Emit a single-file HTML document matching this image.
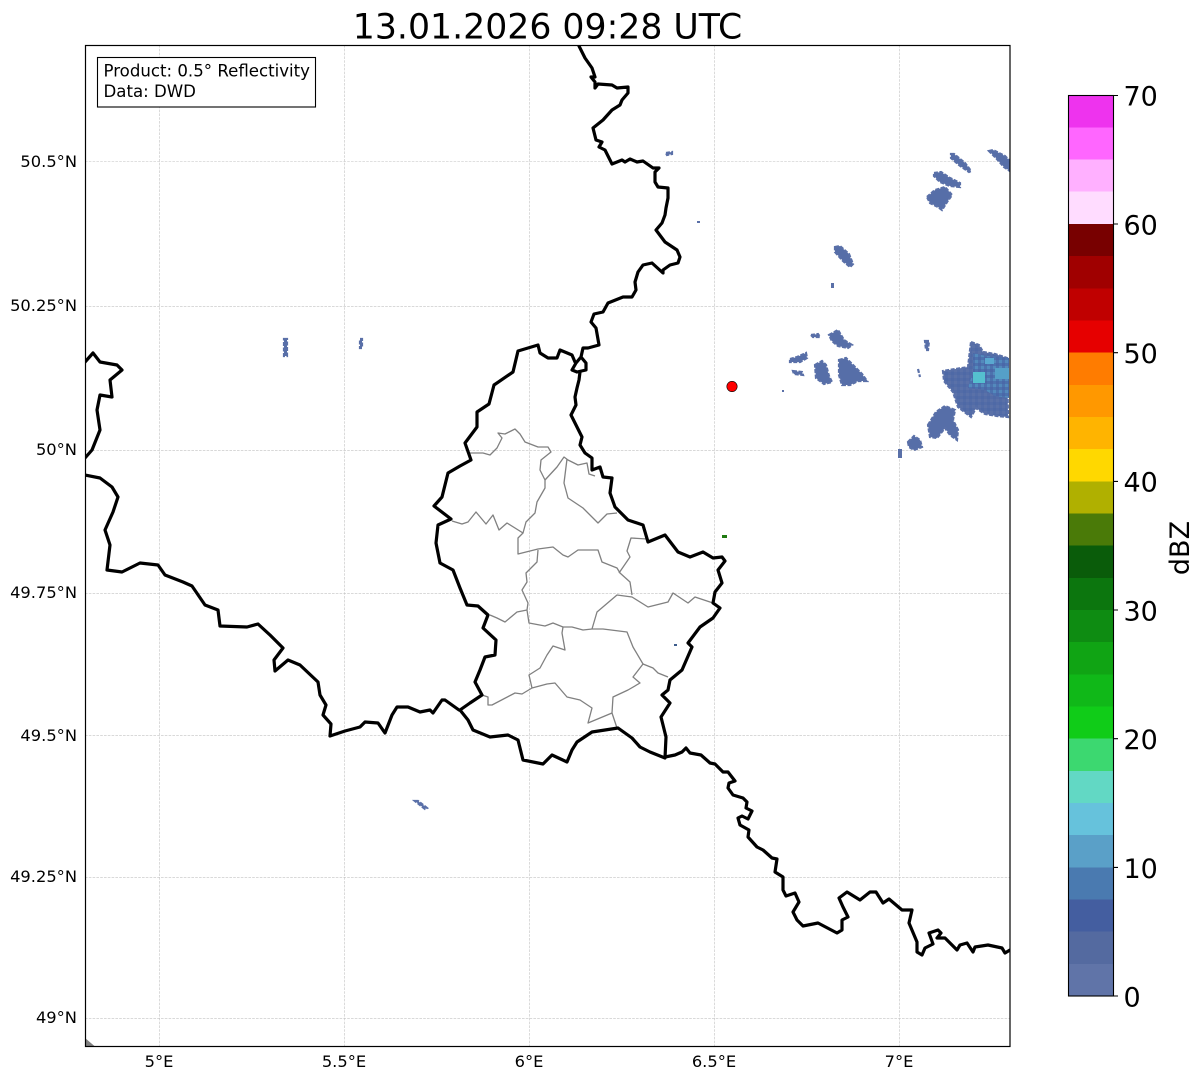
<!DOCTYPE html>
<html><head><meta charset="utf-8"><style>
html,body{margin:0;padding:0;background:#fff;width:1202px;height:1081px;overflow:hidden}
svg{display:block}
text{font-family:"DejaVu Sans",sans-serif;fill:#000}
.t{font-size:16.3px}
.l{font-size:16.6px}
.c{font-size:27px}
.g line{stroke:#c2c2c2;stroke-width:.6;stroke-dasharray:2.6 1.2}
.b{fill:none;stroke:#000;stroke-width:3.2;stroke-linejoin:round;stroke-linecap:round}
.p{fill:none;stroke:#808080;stroke-width:1.3;stroke-linejoin:round}
.r{fill:#566ea8;stroke:#5a70a8;stroke-width:2.2;stroke-dasharray:4 1.5}
</style></head><body>
<svg width="1202" height="1081" viewBox="0 0 1202 1081" xmlns="http://www.w3.org/2000/svg">
<defs>
<pattern id="pix" width="6" height="6" patternUnits="userSpaceOnUse">
<rect width="6" height="6" fill="#536ca7"/><rect x="3" width="3" height="3" fill="#4e69a6"/><rect y="3" width="3" height="3" fill="#5a71a8"/>
</pattern>
<pattern id="pix2" width="6" height="6" patternUnits="userSpaceOnUse">
<rect width="6" height="6" fill="#4c72ae"/><rect x="3" width="3" height="3" fill="#5389bc"/><rect y="3" width="3" height="3" fill="#4a68a8"/>
</pattern>
<clipPath id="ax"><rect x="85.5" y="45.5" width="924.5" height="1001"/></clipPath>
</defs>

<text x="547.5" y="38.500" text-anchor="middle" style="font-size:34.7px">13.01.2026 09:28 UTC</text>

<g class="g" clip-path="url(#ax)">
<line x1="159.600" y1="45" x2="159.600" y2="1047"/><line x1="344.600" y1="45" x2="344.600" y2="1047"/><line x1="529.600" y1="45" x2="529.600" y2="1047"/><line x1="714.600" y1="45" x2="714.600" y2="1047"/><line x1="899.600" y1="45" x2="899.600" y2="1047"/>
<line x1="85" y1="161.500" x2="1010" y2="161.500"/><line x1="85" y1="306.300" x2="1010" y2="306.300"/><line x1="85" y1="450.600" x2="1010" y2="450.600"/><line x1="85" y1="593.300" x2="1010" y2="593.300"/><line x1="85" y1="735.300" x2="1010" y2="735.300"/><line x1="85" y1="877.300" x2="1010" y2="877.300"/><line x1="85" y1="1018.300" x2="1010" y2="1018.300"/>
</g>

<g clip-path="url(#ax)">
<!-- radar -->
<g>
<path class="r" d="M284 339L287 339L287 356L284 356Z"/>
<path class="r" d="M360 339L362 339L362 348L360 348Z"/>
<path class="r" d="M415 801L418 801L427 808L425 809Z"/>
<path class="r" d="M666 153L672 152L672 154L667 155Z"/>
<rect x="697" y="221" width="3" height="2" fill="#5a70a8"/>
<rect x="722" y="535" width="5" height="3" fill="#1f7a10"/>
<rect x="674" y="644" width="3" height="2" fill="#3d5c8c"/>
<path class="r" d="M951 154L954 154L965 163L971 171L969 172L959 165L951 158Z"/>
<path class="r" d="M989 151L993 150L1005 156L1010 161L1010 171L1004 167L996 158Z"/>
<path class="r" d="M934 173L941 172L950 178L960 183L960 187L950 186L940 182L934 176Z"/>
<path class="r" d="M927 197L935 190L945 187L952 195L947 202L942 210L938 207L930 203Z"/>
<path class="r" d="M835 247L840 246L849 254L853 264L850 267L843 261L835 252Z"/>
<rect x="831" y="283" width="3" height="5" fill="#5a70a8"/>
<path class="r" d="M790 359L797 357L806 353L807 358L800 362L790 362Z"/>
<path class="r" d="M793 371L802 372L803 375L794 374Z"/>
<path class="r" d="M815 365L822 361L826 365L829 376L832 382L824 384L816 378Z"/>
<path class="r" d="M839 360L846 358L854 366L862 374L867 381L858 381L850 385L842 385L839 375Z"/>
<path class="r" d="M829 335L838 330L844 340L852 345L848 348L838 346L832 341Z"/>
<path class="r" d="M811 335L818 334L820 337L813 337Z"/>
<path class="r" d="M971 342L979 345L983 352L995 354L1007 358L1008 417L997 416L985 414L976 408L971 417L958 407L953 392L944 381L943 371L968 367Z" style="fill:url(#pix)"/>
<path d="M973 353L986 356L1009 358L1009 398L995 396L985 390L968 388L973 372Z" fill="url(#pix2)"/>
<rect x="973" y="372" width="12" height="11" fill="#55c0cf"/>
<rect x="985" y="358" width="9" height="6" fill="#5aa8d0"/>
<rect x="995" y="368" width="14" height="11" fill="#55a0c8"/>
<path class="r" d="M928 425L936 412L945 406L955 410L953 420L958 430L957 440L950 435L945 428L937 438L930 437Z"/>
<path class="r" d="M908 442L914 436L920 440L922 447L914 450L909 447Z"/>
<rect x="898" y="449" width="4" height="9" fill="#5a70a8"/>
<path class="r" d="M925 341L929 341L928 350L926 350Z"/>
<path class="r" d="M918 369L920 377" />
<rect x="782" y="390" width="2" height="2" fill="#5a70a8"/>
</g>

<!-- province lines -->
<path class="p" d="M470 453L483 453L490 455L497 448L502 438L498 433L505 434L515 429L520 434L525 442L538 447L548 447L551 452L541 460L540 470L545 480L545 488L537 502L535 513L526 522L523 533"/>
<path class="p" d="M452 521L462 524L468 522L476 512L486 524L493 515L499 530L507 523L523 533L518 538L518 554L538 549L553 547L563 555L568 557L578 550L598 550L602 562L617 568L620 573L630 582L632 595"/>
<path class="p" d="M545 480L557 467L564 457L568 460L578 465L587 463L589 474L595 476"/>
<path class="p" d="M567 459L564 483L568 498L583 508L598 523L607 514L617 513"/>
<path class="p" d="M647 539L631 538L627 551L630 557L619 573"/>
<path class="p" d="M538 550L537 562L526 573L527 582L522 590L528 603L527 610L529 623L545 626L553 623L563 627"/>
<path class="p" d="M527 610L517 612L505 622L497 618L490 615"/>
<path class="p" d="M563 627L562 633L565 650L553 646L547 655L540 668L529 675L532 688"/>
<path class="p" d="M563 627L572 627L583 630L592 629L603 629L627 632L633 647L643 664L633 677L640 683L628 690L613 697L612 713L617 728"/>
<path class="p" d="M592 629L597 612L617 595L632 597L648 607L668 602L673 593L688 603L695 597L713 603"/>
<path class="p" d="M643 664L653 668L658 673L668 677"/>
<path class="p" d="M612 713L588 723L592 708L580 700L567 697L555 683L547 684L532 688L522 694L515 693L492 705L488 705L488 697L482 695"/>

<!-- national borders -->
<path class="b" d="M579 46L585 58L592 68L595 77L591 77L595 82L595 88L598 84L612 85L617 88L628 87L628 93L622 100L620 105L612 110L603 120L593 128L596 140L602 142L599 147L605 150L612 164L622 160L625 162L630 159L637 162L643 161L653 168L659 168L655 172L655 182L658 187L668 188L668 198L666 208L665 215L662 223L656 230L665 242L677 250L680 257L678 263L670 265L663 270L663 273L652 263L643 265L638 272L635 282L636 290L632 297L623 297L608 303L603 312L594 314L591 322L596 328L599 345L588 348L583 348L581 357L586 363L586 370L577 372L572 370L576 363L581 357"/>
<path class="b" d="M575 362L572 355L560 350L557 358L548 358L540 353L538 345L518 351L513 372L494 385L489 404L477 412L477 427L465 443L471 460L460 466L448 473L442 497L434 506L451 519L438 525L436 543L440 563L453 570L460 588L467 605L478 606L488 615L483 628L496 640L495 655L485 657L480 670L475 682L482 695L470 703L460 710L468 720L473 730L490 737L508 735L518 740L523 760L543 764L552 755L567 762L572 750L577 742L592 732L618 728L632 738L640 747L650 752L665 758L666 737L661 717L670 703L662 695L668 690L670 680L682 670L692 647L688 643L700 627L713 618L720 608L713 603L715 592L722 583L718 570L725 561L722 557L713 558L703 552L690 557L678 552L665 535L648 542L643 525L628 520L615 507L610 493L612 478L603 477L600 467L592 470L592 458L585 453L580 445L582 437L577 427L571 415L576 405L575 397L577 388L579 380L580 372"/>
<path class="b" d="M85 362L93 353L100 362L117 365L122 370L110 380L112 397L100 395L97 410L100 430L92 450L85 458"/>
<path class="b" d="M85 475L100 478L112 487L118 497L113 512L105 530L110 545L107 570L122 572L140 563L158 565L165 575L183 582L192 586L205 605L218 610L220 626L247 627L258 624L270 635L283 648L274 660L275 671L288 660L300 665L318 682L320 695L326 705L323 715L331 724L330 736L345 731L360 727L365 722L378 723L385 733L392 715L397 707L408 707L420 712L430 710L433 713L442 700L445 700L459 710"/>
<path class="b" d="M665 757L675 755L682 752L686 748L690 753L701 755L710 763L715 764L723 772L728 772L735 781L729 783L728 788L733 795L743 798L747 802L746 808L752 811L748 819L742 816L738 818L740 825L749 830L748 837L757 847L763 850L772 858L777 859L775 872L783 877L783 890L786 896L795 893L799 902L793 912L797 920L803 926L818 923L837 933L842 930L842 920L848 917L843 907L839 898L847 892L860 900L870 892L876 892L883 903L889 899L902 910L912 910L909 923L917 942L917 952L922 955L925 948L933 944L929 933L938 930L941 933L937 938L945 938L957 950L960 945L967 943L973 952L975 947L988 945L1002 948L1005 953L1010 950"/>

<path d="M85 1038L95 1046.500L85 1046.500Z" fill="#808080"/>
<circle cx="732" cy="386.500" r="5.200" fill="#f00" stroke="#000" stroke-width=".6"/>
</g>

<!-- legend -->
<rect x="97.500" y="57.500" width="218" height="49.500" fill="#fff" stroke="#000" stroke-width="1.100"/>
<text class="l" x="103.500" y="76.500">Product: 0.5° Reflectivity</text>
<text class="l" x="103.500" y="97">Data: DWD</text>

<rect x="85.500" y="45.500" width="924.500" height="1001" fill="none" stroke="#000" stroke-width="1.200"/>

<!-- axis labels -->
<g text-anchor="end">
<text class="t" x="77" y="167">50.5°N</text>
<text class="t" x="77" y="311">50.25°N</text>
<text class="t" x="77" y="455">50°N</text>
<text class="t" x="77" y="598">49.75°N</text>
<text class="t" x="77" y="741">49.5°N</text>
<text class="t" x="77" y="882">49.25°N</text>
<text class="t" x="77" y="1023">49°N</text>
</g>
<g text-anchor="middle">
<text class="t" x="159" y="1067">5°E</text>
<text class="t" x="344" y="1067">5.5°E</text>
<text class="t" x="529" y="1067">6°E</text>
<text class="t" x="714" y="1067">6.5°E</text>
<text class="t" x="899" y="1067">7°E</text>
</g>

<!-- colorbar -->
<g shape-rendering="crispEdges">
<rect x="1068" y="95.500" width="45" height="32.500" fill="#ee33ee"/>
<rect x="1068" y="127.500" width="45" height="32.500" fill="#ff66ff"/>
<rect x="1068" y="159.500" width="45" height="32.500" fill="#ffb0ff"/>
<rect x="1068" y="191.700" width="45" height="32.500" fill="#ffdcff"/>
<rect x="1068" y="224" width="45" height="32.500" fill="#780000"/>
<rect x="1068" y="256.200" width="45" height="32.500" fill="#a00000"/>
<rect x="1068" y="288.300" width="45" height="32.500" fill="#c00000"/>
<rect x="1068" y="320.500" width="45" height="32.500" fill="#e60000"/>
<rect x="1068" y="352.700" width="45" height="32.500" fill="#ff7c00"/>
<rect x="1068" y="384.900" width="45" height="32.500" fill="#ff9800"/>
<rect x="1068" y="417" width="45" height="32.500" fill="#ffb400"/>
<rect x="1068" y="449.200" width="45" height="32.500" fill="#ffd800"/>
<rect x="1068" y="481.400" width="45" height="32.500" fill="#b0b000"/>
<rect x="1068" y="513.500" width="45" height="32.500" fill="#4a7a08"/>
<rect x="1068" y="545.700" width="45" height="32.500" fill="#0a5c0a"/>
<rect x="1068" y="577.900" width="45" height="32.500" fill="#0c760e"/>
<rect x="1068" y="610" width="45" height="32.500" fill="#0e8c12"/>
<rect x="1068" y="642.200" width="45" height="32.500" fill="#10a414"/>
<rect x="1068" y="674.400" width="45" height="32.500" fill="#10b818"/>
<rect x="1068" y="706.500" width="45" height="32.500" fill="#10cc18"/>
<rect x="1068" y="738.700" width="45" height="32.500" fill="#3cd870"/>
<rect x="1068" y="770.900" width="45" height="32.500" fill="#62d8c4"/>
<rect x="1068" y="803" width="45" height="32.500" fill="#66c2dc"/>
<rect x="1068" y="835.200" width="45" height="32.500" fill="#5aa0c8"/>
<rect x="1068" y="867.400" width="45" height="32.500" fill="#4a7ab0"/>
<rect x="1068" y="899.500" width="45" height="32.500" fill="#445ea0"/>
<rect x="1068" y="931.700" width="45" height="32.500" fill="#546aa0"/>
<rect x="1068" y="963.900" width="45" height="32.100" fill="#6074a8"/>
</g>
<rect x="1068.500" y="95.500" width="45" height="900.500" fill="none" stroke="#000" stroke-width="1.100"/>
<path d="M1113 95.500h5M1113 224h5M1113 352.700h5M1113 481.400h5M1113 610h5M1113 738.700h5M1113 867.400h5M1113 996h5" stroke="#000" stroke-width="1.100" fill="none"/>
<text class="c" x="1123.500" y="105.500">70</text>
<text class="c" x="1123.500" y="234.500">60</text>
<text class="c" x="1123.500" y="363">50</text>
<text class="c" x="1123.500" y="491.500">40</text>
<text class="c" x="1123.500" y="620.500">30</text>
<text class="c" x="1123.500" y="749">20</text>
<text class="c" x="1123.500" y="878">10</text>
<text class="c" x="1123.500" y="1006.500">0</text>
<text class="c" transform="translate(1189 548) rotate(-90)" text-anchor="middle">dBZ</text>
</svg>
</body></html>
